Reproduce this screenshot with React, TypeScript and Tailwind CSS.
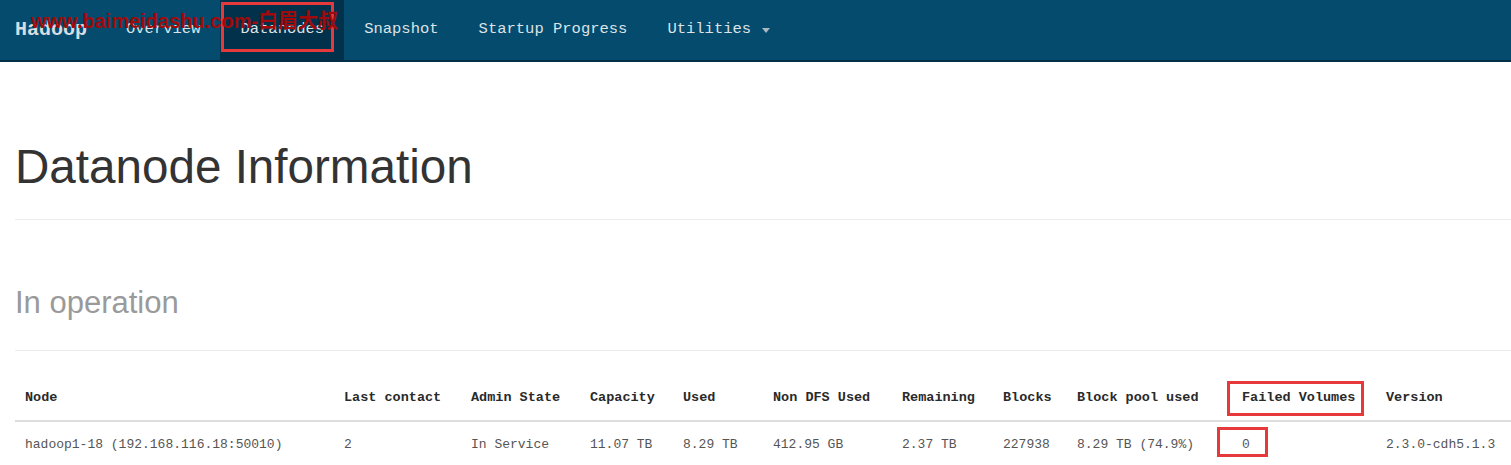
const mono = { fontFamily: '"Liberation Mono", "Noto Sans CJK SC", monospace' };

const navItems = ["Overview", "Datanodes", "Snapshot", "Startup Progress"];

const columns = [
    { label: "Node", w: "w-[319px]" },
    { label: "Last contact", w: "w-[127px]" },
    { label: "Admin State", w: "w-[119px]" },
    { label: "Capacity", w: "w-[93px]" },
    { label: "Used", w: "w-[90px]" },
    { label: "Non DFS Used", w: "w-[129px]" },
    { label: "Remaining", w: "w-[101px]" },
    { label: "Blocks", w: "w-[74px]" },
    { label: "Block pool used", w: "w-[165px]" },
    { label: "Failed Volumes", w: "w-[144px]" },
    { label: "Version", w: "w-[135px]" },
];

const row = [
    "hadoop1-18 (192.168.116.18:50010)",
    "2",
    "In Service",
    "11.07 TB",
    "8.29 TB",
    "412.95 GB",
    "2.37 TB",
    "227938",
    "8.29 TB (74.9%)",
    "0",
    "2.3.0-cdh5.1.3",
];

const App = () => {
    return (
        <div className="w-[1511px] h-[465px] overflow-hidden bg-white" style={{ fontFamily: '"Liberation Sans", Arial, sans-serif' }}>
            {/* navbar */}
            <div className="relative h-[62px] bg-[#044b6e] border-b-2 border-[#022f47] flex items-stretch">
                <div className="flex items-center pl-[15px] pr-[19px] text-[20px] text-[#d8dde0] font-bold" style={mono}>
                    Hadoop
                </div>
                {navItems.map((item) => {
                    const active = item === "Datanodes";
                    return (
                        <div
                            key={item}
                            className={
                                "relative flex items-center px-[20px] text-[15.5px] text-[#dde3e6] " +
                                (active ? "bg-[#02314b]" : "")
                            }
                            style={mono}
                        >
                            {item}
                            {active && (
                                <div className="absolute left-[1px] top-[2px] w-[113px] h-[50px] border-[3px] border-[#e5393b]" />
                            )}
                        </div>
                    );
                })}
                <div className="flex items-center gap-[11px] px-[20px] text-[15.5px] text-[#dde3e6]" style={mono}>
                    Utilities
                    <svg width="8" height="5" viewBox="0 0 8 5">
                        <path d="M0 0 L8 0 L4 5 Z" fill="#aab8c2" />
                    </svg>
                </div>
                {/* watermark */}
                <div
                    className="absolute left-[31px] top-[9px] text-[20px] leading-[24px] font-bold text-[#a00a0a] whitespace-nowrap"
                    style={{ fontFamily: '"Liberation Sans", "Noto Sans CJK SC", sans-serif' }}
                >
                    www.baimeidashu.com-白眉大叔
                </div>
            </div>

            <div className="pl-[15px]">
                <h1 className="mt-[79px] text-[47.6px] leading-[52px] text-[#333333]">Datanode Information</h1>
                <div className="mt-[26px] h-px bg-[#ececec]" />
                <h2 className="mt-[66px] text-[31px] leading-[34px] text-[#9a9a9a]">In operation</h2>
                <div className="mt-[30px] h-px bg-[#ececec]" />

                <table className="mt-[27px] table-fixed w-[1496px] border-collapse" style={mono}>
                    <thead>
                        <tr>
                            {columns.map((c) => (
                                <th
                                    key={c.label}
                                    className={
                                        "relative text-left font-bold text-[13.5px] leading-[20px] text-[#2a2a2a] pl-[10px] pt-[10px] pb-[12px] border-b-2 border-[#dddddd] whitespace-nowrap " +
                                        c.w
                                    }
                                >
                                    {c.label}
                                    {c.label === "Failed Volumes" && (
                                        <div className="absolute left-[-5px] top-[3px] w-[137px] h-[35px] border-[3px] border-[#e5393b]" />
                                    )}
                                </th>
                            ))}
                        </tr>
                    </thead>
                    <tbody>
                        <tr>
                            {row.map((v, i) => (
                                <td
                                    key={i}
                                    className="relative text-left text-[13px] leading-[20px] text-[#555555] pl-[10px] pt-[13px] pb-[10px] whitespace-nowrap"
                                >
                                    {v}
                                    {i === 9 && (
                                        <div className="absolute left-[-15px] top-[5px] w-[51px] h-[30px] border-[3px] border-[#e5393b]" />
                                    )}
                                </td>
                            ))}
                        </tr>
                    </tbody>
                </table>
            </div>
        </div>
    );
};

export default App;
